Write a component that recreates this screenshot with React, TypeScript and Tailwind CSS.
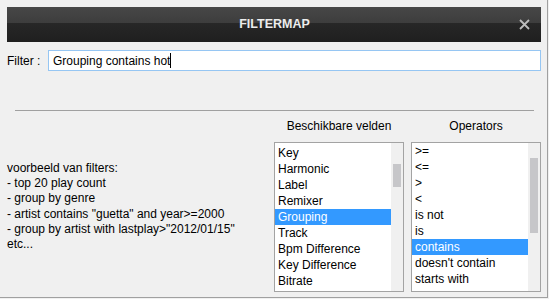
import React from "react";

const fields = ["Key", "Harmonic", "Label", "Remixer", "Grouping", "Track", "Bpm Difference", "Key Difference", "Bitrate"];
const ops = [">=", "<=", ">", "<", "is not", "is", "contains", "doesn't contain", "starts with"];

function ListBox({ items, selected, padTop, thumbTop, thumbH }: { items: string[]; selected: string; padTop: string; thumbTop: string; thumbH: string }) {
  return (
    <div className="flex h-[150px] w-[130px] border border-[#a3a3a3] bg-white">
      <div className={`flex w-[116px] flex-col overflow-hidden ${padTop}`}>
        {items.map((it) => (
          <div
            key={it}
            className={`h-[16px] shrink-0 whitespace-nowrap pl-[3px] leading-[16px] ${it === selected ? "bg-[#3399ff] text-white" : "text-black"}`}
          >
            {it}
          </div>
        ))}
      </div>
      <div className="flex w-[12px] flex-col bg-[#f0f0f0]">
        <div className={`ml-[2px] w-[8px] bg-[#c6c6c9] ${thumbTop} ${thumbH}`} />
      </div>
    </div>
  );
}

export default function App() {
  return (
    <div className="h-[299px] w-[549px] bg-[#f0f0f0] text-[12px] text-black" style={{ fontFamily: '"Liberation Sans", Arial, sans-serif' }}>
      <div className="h-[298px] w-[548px] border-b border-r border-[#a0a0a0] pl-[7px] pr-[6px] pt-[7px]">
        <div className="grid h-[35px] grid-cols-[1fr_auto_1fr] items-center bg-[linear-gradient(to_bottom,#474747_0%,#3d3d3d_46%,#272727_46%,#1f1f1f_100%)]">
          <div />
          <div className="pl-[1px] text-[12.5px] font-bold text-[#ececec]">FILTERMAP</div>
          <div className="flex justify-end pr-[11px]">
            <svg width="11" height="11" viewBox="0 0 11 11">
              <path d="M1 1L10 10M10 1L1 10" stroke="#bdbdbd" strokeWidth="1.8" />
            </svg>
          </div>
        </div>

        <div className="mt-[8px] flex h-[21px] items-center">
          <div className="w-[41px]">Filter :</div>
          <div className="flex h-[21px] w-[493px] items-center border border-[#96c6f3] bg-white pl-[4px] text-black">
            <span>Grouping contains hot</span>
            <span className="inline-block h-[15px] w-[1px] bg-black" />
          </div>
        </div>

        <div className="ml-[8px] mt-[39px] h-[1px] w-[519px] bg-[#a0a0a0]" />

        <div className="flex">
          <div className="w-[267px] pt-[50px] leading-[15.2px]">
            <div>voorbeeld van filters:</div>
            <div>- top 20 play count</div>
            <div>- group by genre</div>
            <div>- artist contains "guetta" and year&gt;=2000</div>
            <div>- group by artist with lastplay&gt;"2012/01/15"</div>
            <div>etc...</div>
          </div>
          <div className="flex flex-col pt-[8px]">
            <div className="mb-[9px] h-[14px] text-center leading-[14px]">Beschikbare velden</div>
            <ListBox items={fields} selected="Grouping" padTop="pt-[2px]" thumbTop="mt-[21px]" thumbH="h-[23px]" />
          </div>
          <div className="ml-[7px] flex flex-col pt-[8px]">
            <div className="mb-[9px] h-[14px] text-center leading-[14px]">Operators</div>
            <ListBox items={ops} selected="contains" padTop="pt-0" thumbTop="mt-[15px]" thumbH="h-[75px]" />
          </div>
        </div>
      </div>
    </div>
  );
}
